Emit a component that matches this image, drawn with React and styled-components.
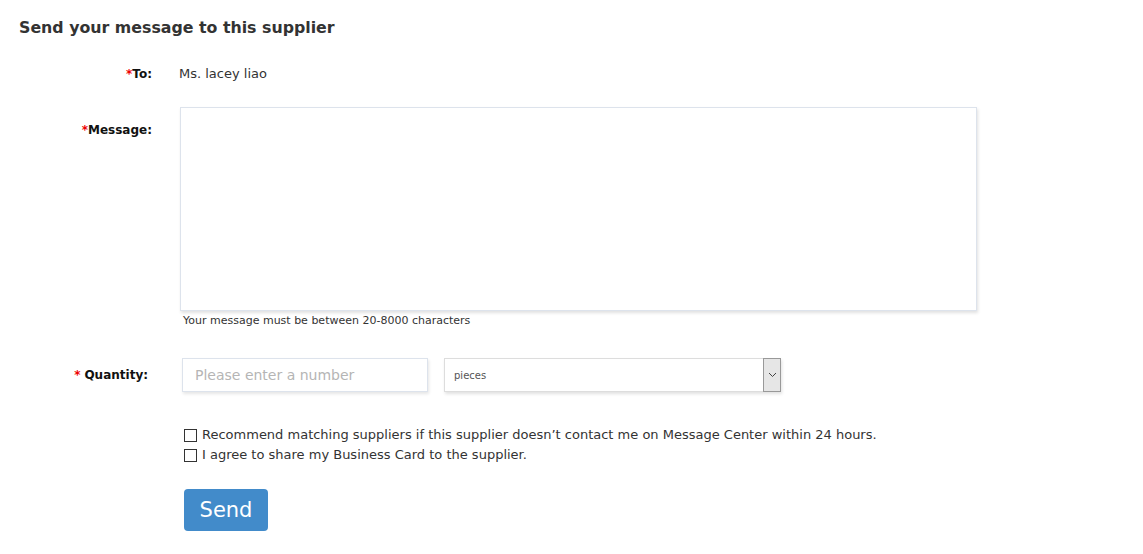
import React from "react";
import styled, { createGlobalStyle } from "styled-components";

const GlobalStyle = createGlobalStyle`
  body {
    margin: 0;
    background: #fff;
    font-family: "DejaVu Sans", Verdana, sans-serif;
    color: #333;
  }
`;

const Page = styled.div`
  padding: 17px 19px 20px;
`;

const Title = styled.h2`
  margin: 0 0 27px;
  font-size: 15.8px;
  font-weight: bold;
  color: #333;
  line-height: 22px;
`;

const Row = styled.div`
  display: grid;
  grid-template-columns: ${(p) => p.$labelWidth || 133}px 1fr;
  column-gap: ${(p) => p.$gap || 26}px;
  align-items: ${(p) => p.$align || "start"};
  margin-top: ${(p) => p.$mt || 0}px;
  margin-bottom: ${(p) => p.$mb || 0}px;
`;

const Label = styled.label`
  text-align: right;
  font-size: 12px;
  font-weight: bold;
  color: #111;
  padding-top: ${(p) => p.$pt || 0}px;
`;

const Star = styled.span`
  color: #e00;
  margin-right: ${(p) => p.$space || 0}px;
`;

const ToValue = styled.span`
  font-size: 13px;
  color: #333;
`;

const MessageBox = styled.textarea`
  display: block;
  width: 797px;
  height: 204px;
  box-sizing: border-box;
  border: 1px solid #dde3ec;
  box-shadow: 1px 2px 3px rgba(0, 0, 0, 0.12);
  resize: none;
  outline: none;
  font-family: inherit;
`;

const Hint = styled.div`
  margin: 3px 0 0 3px;
  font-size: 11px;
  color: #333;
`;

const QtyLine = styled.div`
  display: flex;
  gap: 16px;
  align-items: center;
`;

const NumberInput = styled.input`
  width: 246px;
  height: 34px;
  box-sizing: border-box;
  border: 1px solid #dde3ec;
  box-shadow: 1px 2px 3px rgba(0, 0, 0, 0.1);
  padding: 0 12px;
  font-family: inherit;
  font-size: 14px;
  outline: none;
  &::placeholder {
    color: #b5b5b5;
  }
`;

const SelectBox = styled.div`
  width: 337px;
  height: 34px;
  box-sizing: border-box;
  border: 1px solid #ddd;
  box-shadow: 1px 2px 3px rgba(0, 0, 0, 0.12);
  display: flex;
  align-items: stretch;
  font-size: 10px;
  color: #555;
`;

const SelectText = styled.div`
  flex: 1;
  display: flex;
  align-items: center;
  padding-left: 9px;
`;

const Arrow = styled.div`
  width: 16px;
  background: #e6e6e6;
  border: 1px solid #999;
  margin: -1px -1px -1px 0;
  display: flex;
  align-items: center;
  justify-content: center;
`;

const Checks = styled.div`
  display: flex;
  flex-direction: column;
  gap: 4px;
  margin-top: 35px;
`;

const CheckLine = styled.label`
  display: flex;
  align-items: center;
  gap: 5px;
  font-size: 13px;
  line-height: 16px;
  color: #333;
`;

const Box = styled.span`
  width: 11px;
  height: 11px;
  border: 1px solid #333;
  background: #fff;
  display: inline-block;
`;

const SendButton = styled.button`
  margin-top: 26px;
  width: 84px;
  height: 42px;
  border: none;
  border-radius: 4px;
  background: #428bca;
  color: #fff;
  font-family: "DejaVu Sans", sans-serif;
  font-size: 21px;
  cursor: pointer;
`;

export default function App() {
  return (
    <Page>
      <GlobalStyle />
      <Title>Send your message to this supplier</Title>
      <Row $mb={26} $gap={27} $align="center">
        <Label>
          <Star>*</Star>To:
        </Label>
        <ToValue>Ms. lacey liao</ToValue>
      </Row>
      <Row $gap={28}>
        <Label $pt={16}>
          <Star>*</Star>Message:
        </Label>
        <div>
          <MessageBox />
          <Hint>Your message must be between 20-8000 characters</Hint>
        </div>
      </Row>
      <Row $labelWidth={129} $gap={34} $align="center" $mt={31}>
        <Label>
          <Star $space={4}>*</Star>Quantity:
        </Label>
        <QtyLine>
          <NumberInput placeholder="Please enter a number" />
          <SelectBox>
            <SelectText>pieces</SelectText>
            <Arrow>
              <svg width="9" height="6" viewBox="0 0 9 6">
                <path d="M1 1 L4.5 4.5 L8 1" fill="none" stroke="#444" strokeWidth="1" />
              </svg>
            </Arrow>
          </SelectBox>
        </QtyLine>
      </Row>
      <Row $gap={32}>
        <span />
        <div>
          <Checks>
            <CheckLine>
              <Box />
              Recommend matching suppliers if this supplier doesn’t contact me on Message Center within 24 hours.
            </CheckLine>
            <CheckLine>
              <Box />I agree to share my Business Card to the supplier.
            </CheckLine>
          </Checks>
          <SendButton>Send</SendButton>
        </div>
      </Row>
    </Page>
  );
}
